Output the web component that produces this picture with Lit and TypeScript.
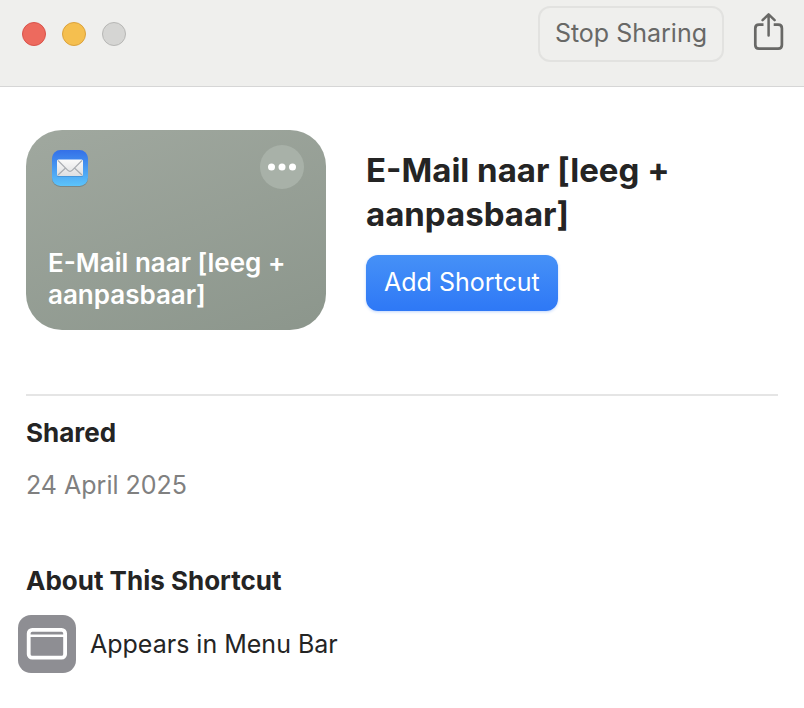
import { LitElement, html, css } from "lit";
import { customElement, property } from "lit/decorators.js";

@customElement("shortcut-card")
class ShortcutCard extends LitElement {
  @property() name = "";

  static styles = css`
    :host {
      display: block;
      flex: none;
    }
    .card {
      box-sizing: border-box;
      width: 300px;
      min-height: 200px;
      padding: 15px 22px 19px;
      border-radius: 36px;
      background: linear-gradient(160deg, #a0a89f, #8c968c);
      display: flex;
      flex-direction: column;
      justify-content: space-between;
      color: #fff;
    }
    .top {
      display: flex;
      justify-content: space-between;
      align-items: center;
    }
    .mail {
      display: block;
      width: 44px;
      height: 44px;
    }
    .more {
      width: 44px;
      height: 44px;
      padding: 0;
      border: 0;
      border-radius: 50%;
      background: #a8b1a8;
      color: #fff;
    }
    .more svg {
      display: block;
    }
    .name {
      font-size: 26px;
      font-weight: 600;
      line-height: 32px;
    }
  `;

  render() {
    return html`
      <div class="card">
        <div class="top">
          <svg class="mail" viewBox="0 0 44 44" aria-hidden="true">
            <defs>
              <linearGradient id="sky" x1="0" y1="0" x2="0" y2="1">
                <stop offset="0" stop-color="#3470e8" />
                <stop offset="1" stop-color="#5cc4fa" />
              </linearGradient>
              <linearGradient id="paper" x1="0" y1="0" x2="0" y2="1">
                <stop offset="0" stop-color="#fafafa" />
                <stop offset="1" stop-color="#dedfe1" />
              </linearGradient>
            </defs>
            <rect x="4" y="6" width="36" height="36" rx="8.5" fill="#5b6a70" opacity="0.5" />
            <rect x="4" y="5" width="36" height="36" rx="8.5" fill="url(#sky)" />
            <rect x="9" y="15" width="26" height="17" rx="1.5" fill="#3c7fc0" opacity="0.5" />
            <rect x="9" y="14.5" width="26" height="16.5" rx="1.5" fill="url(#paper)" />
            <path
              d="M10 15.5 L19.6 25.2 Q22 27.6 24.4 25.2 L34 15.5 M10 30 L17.3 23.2 M34 30 L26.7 23.2"
              fill="none"
              stroke="#a9adb2"
              stroke-width="1.2"
            />
          </svg>
          <button class="more" aria-label="More options">
            <svg width="44" height="44" viewBox="0 0 44 44" fill="currentColor">
              <circle cx="11.5" cy="22" r="3.5" />
              <circle cx="22" cy="22" r="3.5" />
              <circle cx="32.5" cy="22" r="3.5" />
            </svg>
          </button>
        </div>
        <div class="name">${this.name}</div>
      </div>
    `;
  }
}

@customElement("app-root")
class AppRoot extends LitElement {
  private shortcut = "E-Mail naar [leeg + aanpasbaar]";

  static styles = css`
    :host {
      display: block;
      min-height: 100vh;
      background: #fff;
      color: #242424;
      font-family: Inter, "Liberation Sans", sans-serif;
      font-size: 25px;
      line-height: 32px;
    }
    button {
      font: inherit;
      white-space: nowrap;
    }
    .toolbar {
      display: flex;
      align-items: center;
      padding: 6px 14px 24px 22px;
      background: #efefed;
      border-bottom: 1px solid #d6d6d6;
    }
    .lights {
      display: flex;
      gap: 16px;
      margin-right: auto;
    }
    .light {
      box-sizing: border-box;
      width: 24px;
      height: 24px;
      padding: 0;
      border: 1px solid;
      border-radius: 50%;
    }
    .close {
      background: #ed6a5e;
      border-color: #d9534b;
    }
    .minimise {
      background: #f5bf4f;
      border-color: #dba23d;
    }
    .zoom {
      background: #d5d5d3;
      border-color: #b7b7b5;
    }
    .stop {
      box-sizing: border-box;
      height: 56px;
      padding: 0 15px 2px;
      border: 2px solid #e2e2e0;
      border-radius: 12px;
      background: transparent;
      color: #686866;
    }
    .share {
      margin-left: 23px;
      padding: 0;
      border: 0;
      background: transparent;
      color: #686866;
    }
    .share svg {
      display: block;
    }
    .content {
      padding: 43px 26px 35px;
    }
    .hero {
      display: flex;
      align-items: center;
      gap: 40px;
      padding-bottom: 64px;
      border-bottom: 2px solid #e5e5e5;
    }
    .intro {
      min-width: 0;
      padding-bottom: 1px;
    }
    h1 {
      margin: 0 0 19px;
      max-width: 340px;
      font-size: 33px;
      line-height: 44px;
      font-weight: 700;
    }
    .add {
      display: block;
      height: 56px;
      padding: 0 18px 2px;
      border: 0;
      border-radius: 12px;
      background: linear-gradient(#4691f7, #2e78f6);
      box-shadow: 0 1px 3px rgba(46, 120, 246, 0.3);
      color: #fff;
    }
    h2 {
      margin: 0;
      font-size: 26px;
      line-height: 32px;
      font-weight: 700;
    }
    .shared {
      padding: 21px 0 64px;
    }
    .date {
      margin: 20px 0 0;
      color: #808080;
    }
    .feature {
      display: flex;
      align-items: center;
      gap: 14px;
      margin: 18px 0 0 -8px;
    }
    .feature svg {
      flex: none;
    }
  `;

  render() {
    return html`
      <header class="toolbar">
        <div class="lights">
          <button class="light close" aria-label="Close"></button>
          <button class="light minimise" aria-label="Minimise"></button>
          <button class="light zoom" aria-label="Zoom" disabled></button>
        </div>
        <button class="stop">Stop Sharing</button>
        <button class="share" aria-label="Share">
          <svg width="43" height="44" viewBox="0 0 43 44" fill="none" stroke="currentColor">
            <path
              d="M16.5 12.7 H12 Q8.3 12.7 8.3 16.4 V32.9 Q8.3 36.6 12 36.6 H31.2 Q34.9 36.6 34.9 32.9 V16.4 Q34.9 12.7 31.2 12.7 H26.7"
              stroke-width="2.7"
            />
            <path d="M21.6 23.6 V3 M15.6 8.2 L21.6 2.4 L27.6 8.2" stroke-width="2.5" stroke-linecap="round" stroke-linejoin="round" />
          </svg>
        </button>
      </header>
      <main class="content">
        <section class="hero">
          <shortcut-card .name=${this.shortcut}></shortcut-card>
          <div class="intro">
            <h1>${this.shortcut}</h1>
            <button class="add">Add Shortcut</button>
          </div>
        </section>
        <section class="shared">
          <h2>Shared</h2>
          <p class="date">24 April 2025</p>
        </section>
        <section>
          <h2>About This Shortcut</h2>
          <div class="feature">
            <svg width="58" height="58" viewBox="0 0 58 58" aria-hidden="true">
              <rect width="58" height="58" rx="13" fill="#8e8e93" />
              <rect x="10.7" y="14.9" width="36.4" height="27.8" rx="3.5" fill="none" stroke="#fff" stroke-width="3.8" />
              <path d="M11 20.8 H46.5" stroke="#fff" stroke-width="2.6" />
            </svg>
            <span>Appears in Menu Bar</span>
          </div>
        </section>
      </main>
    `;
  }
}
